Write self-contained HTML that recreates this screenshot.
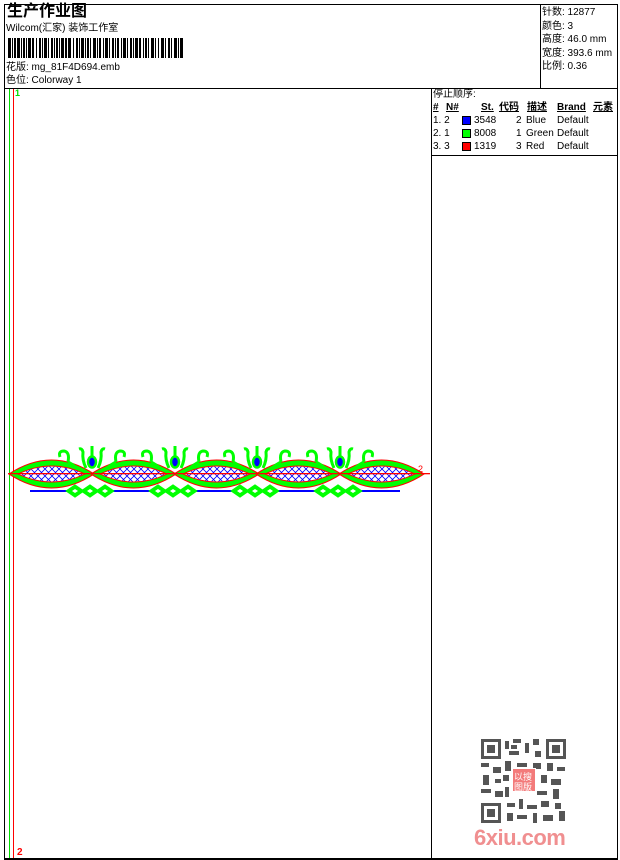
<!DOCTYPE html>
<html><head><meta charset="utf-8"><style>
html,body{margin:0;padding:0;background:#fff;}
body{width:620px;height:860px;position:relative;overflow:hidden;font-family:"Liberation Sans","Noto Sans CJK SC",sans-serif;color:#000;}
.a{position:absolute;}
.t{font-size:10px;line-height:12px;white-space:nowrap;}
.b{background:#000;}
</style></head><body>
<div class="a b" style="left:4px;top:4px;width:614px;height:1px"></div>
<div class="a b" style="left:4px;top:858px;width:614px;height:2px"></div>
<div class="a b" style="left:4px;top:4px;width:1px;height:855px"></div>
<div class="a b" style="left:617px;top:4px;width:1px;height:855px"></div>
<div class="a b" style="left:4px;top:88px;width:614px;height:1px"></div>
<div class="a b" style="left:540px;top:4px;width:1px;height:84px"></div>
<div class="a b" style="left:431px;top:88px;width:1px;height:771px"></div>
<div class="a b" style="left:431px;top:155px;width:187px;height:1px"></div>
<div class="a" style="left:7px;top:2px;font-size:16px;font-weight:bold;line-height:19px">生产作业图</div>
<div class="a t" style="left:6px;top:23px">Wilcom(汇家) 装饰工作室</div>
<svg class="a" style="left:8px;top:38px" width="176" height="20">
<g fill="#000">
<rect x="0" width="3" height="20"/><rect x="4" width="1" height="20"/><rect x="6" width="2" height="20"/><rect x="9" width="3" height="20"/><rect x="13" width="1" height="20"/><rect x="15" width="2" height="20"/><rect x="18" width="1" height="20"/><rect x="20" width="3" height="20"/><rect x="24" width="2" height="20"/><rect x="28" width="1" height="20"/><rect x="31" width="2" height="20"/><rect x="34" width="1" height="20"/><rect x="36" width="3" height="20"/><rect x="40" width="1" height="20"/><rect x="43" width="2" height="20"/><rect x="46" width="1" height="20"/><rect x="48" width="2" height="20"/><rect x="51" width="1" height="20"/><rect x="53" width="3" height="20"/><rect x="57" width="2" height="20"/><rect x="60" width="3" height="20"/><rect x="65" width="1" height="20"/><rect x="68" width="2" height="20"/><rect x="71" width="1" height="20"/><rect x="73" width="3" height="20"/><rect x="77" width="1" height="20"/><rect x="79" width="2" height="20"/><rect x="82" width="1" height="20"/><rect x="85" width="3" height="20"/><rect x="89" width="1" height="20"/><rect x="91" width="2" height="20"/><rect x="95" width="1" height="20"/><rect x="97" width="3" height="20"/><rect x="101" width="1" height="20"/><rect x="104" width="2" height="20"/><rect x="107" width="1" height="20"/><rect x="109" width="2" height="20"/><rect x="113" width="1" height="20"/><rect x="115" width="3" height="20"/><rect x="119" width="1" height="20"/><rect x="122" width="2" height="20"/><rect x="125" width="1" height="20"/><rect x="127" width="3" height="20"/><rect x="131" width="2" height="20"/><rect x="135" width="1" height="20"/><rect x="137" width="2" height="20"/><rect x="140" width="1" height="20"/><rect x="143" width="3" height="20"/><rect x="147" width="1" height="20"/><rect x="150" width="1" height="20"/><rect x="153" width="3" height="20"/><rect x="157" width="1" height="20"/><rect x="160" width="2" height="20"/><rect x="163" width="1" height="20"/><rect x="166" width="3" height="20"/><rect x="170" width="1" height="20"/><rect x="172" width="3" height="20"/>
</g></svg>
<div class="a t" style="left:6px;top:62px">花版: mg_81F4D694.emb</div>
<div class="a t" style="left:6px;top:75px">色位: Colorway 1</div>
<div class="a t" style="left:542px;top:6px;line-height:13.5px">针数: 12877<br>颜色: 3<br>高度: 46.0 mm<br>宽度: 393.6 mm<br>比例: 0.36</div>
<div class="a t" style="left:433px;top:89px">停止顺序:</div>
<div class="a t" style="left:433px;top:102px;font-weight:bold;text-decoration:underline">#</div>
<div class="a t" style="left:446px;top:102px;font-weight:bold;text-decoration:underline">N#</div>
<div class="a t" style="left:481px;top:102px;font-weight:bold;text-decoration:underline">St.</div>
<div class="a t" style="left:499px;top:102px;font-weight:bold;text-decoration:underline">代码</div>
<div class="a t" style="left:527px;top:102px;font-weight:bold;text-decoration:underline">描述</div>
<div class="a t" style="left:557px;top:102px;font-weight:bold;text-decoration:underline">Brand</div>
<div class="a t" style="left:593px;top:102px;font-weight:bold;text-decoration:underline">元素</div>
<div class="a t" style="left:433px;top:115px">1. 2</div><div class="a" style="left:462px;top:116px;width:9px;height:9px;background:#0000ff;border:1px solid #000;box-sizing:border-box"></div><div class="a t" style="left:474px;top:115px">3548</div><div class="a t" style="left:516px;top:115px">2</div><div class="a t" style="left:526px;top:115px">Blue</div><div class="a t" style="left:557px;top:115px">Default</div>
<div class="a t" style="left:433px;top:128px">2. 1</div><div class="a" style="left:462px;top:129px;width:9px;height:9px;background:#00ff00;border:1px solid #000;box-sizing:border-box"></div><div class="a t" style="left:474px;top:128px">8008</div><div class="a t" style="left:516px;top:128px">1</div><div class="a t" style="left:526px;top:128px">Green</div><div class="a t" style="left:557px;top:128px">Default</div>
<div class="a t" style="left:433px;top:141px">3. 3</div><div class="a" style="left:462px;top:142px;width:9px;height:9px;background:#ff0000;border:1px solid #000;box-sizing:border-box"></div><div class="a t" style="left:474px;top:141px">1319</div><div class="a t" style="left:516px;top:141px">3</div><div class="a t" style="left:526px;top:141px">Red</div><div class="a t" style="left:557px;top:141px">Default</div>
<div class="a" style="left:9px;top:89px;width:1px;height:769px;background:#00dd00"></div>
<div class="a" style="left:13px;top:89px;width:1px;height:769px;background:#ff0000"></div>
<div class="a" style="left:15px;top:88px;font-size:9px;font-weight:bold;color:#00dd00;line-height:10px">1</div>
<div class="a" style="left:17px;top:847px;font-size:10px;font-weight:bold;color:#ff0000;line-height:11px">2</div>
<svg class="a" style="left:0;top:0" width="431" height="860">
<defs>
<pattern id="h" width="7" height="7" patternUnits="userSpaceOnUse">
<path d="M0 0L7 7M7 0L0 7" stroke="#0000ff" stroke-width="0.8"/>
</pattern>
<g id="lens">
<path d="M-2 474Q41.5 445 85 474Q41.5 503 -2 474Z" fill="#ff0000"/>
<path d="M0 474Q41.5 447 83 474Q41.5 501 0 474Z" fill="#00ff00"/>
<path d="M7 474Q41.5 457 76 474Q41.5 491 7 474Z" fill="#ff0000"/>
<path d="M9 474Q41.5 459 74 474Q41.5 489 9 474Z" fill="#fff"/>
<path d="M9 474Q41.5 459 74 474Q41.5 489 9 474Z" fill="url(#h)"/>
</g>
<g id="crown" fill="none" stroke="#00ff00" stroke-width="3">
<path d="M-6 468Q-10 460 -9 452Q-10 448 -13 449"/><path d="M6 468Q10 460 9 452Q10 448 13 449"/><path d="M0 463V446"/>
<ellipse cx="0" cy="462" rx="4" ry="5.5" fill="#0000ff" stroke-width="2.5"/>
<path d="M-12 470Q-20 464 -24 462"/><path d="M12 470Q20 464 24 462"/>
<path d="M-24 462Q-22 452 -28 451Q-34 451 -32 457"/><path d="M24 462Q22 452 28 451Q34 451 32 457"/>
</g>
<g id="dia" fill="#00ff00" stroke="#00ff00" stroke-width="2">
<path d="M-23 491L-15 485.5L-7 491L-15 496.5Z"/><path d="M-8 491L0 485.5L8 491L0 496.5Z"/><path d="M7 491L15 485.5L23 491L15 496.5Z"/>
</g>
<g id="diw" fill="#fff">
<path d="M-18 491L-15 489L-12 491L-15 493Z"/><path d="M-3 491L0 489L3 491L0 493Z"/><path d="M12 491L15 489L18 491L15 493Z"/>
</g>
</defs>
<rect x="30" y="490" width="370" height="2" fill="#0000ff"/>
<use href="#lens" transform="translate(10 0)"/>
<use href="#lens" transform="translate(92 0)"/>
<use href="#lens" transform="translate(175 0)"/>
<use href="#lens" transform="translate(257 0)"/>
<use href="#lens" transform="translate(340 0)"/>
<use href="#crown" transform="translate(92 0)"/>
<use href="#crown" transform="translate(175 0)"/>
<use href="#crown" transform="translate(257 0)"/>
<use href="#crown" transform="translate(340 0)"/>
<use href="#dia" transform="translate(90 0)"/><use href="#diw" transform="translate(90 0)"/>
<use href="#dia" transform="translate(173 0)"/><use href="#diw" transform="translate(173 0)"/>
<use href="#dia" transform="translate(255 0)"/><use href="#diw" transform="translate(255 0)"/>
<use href="#dia" transform="translate(338 0)"/><use href="#diw" transform="translate(338 0)"/>
<rect x="8" y="473" width="422" height="1.3" fill="#ff0000"/>
<text x="418" y="472" font-size="9" fill="#ff0000" font-family="Liberation Sans">2</text>
</svg>
<svg class="a" style="left:481px;top:739px" width="85" height="84">
<g fill="#555">
<rect x="0" y="0" width="20" height="20"/><rect x="65" y="0" width="20" height="20"/><rect x="0" y="64" width="20" height="20"/>
<rect x="24" y="2" width="4" height="8"/><rect x="32" y="0" width="8" height="4"/><rect x="44" y="4" width="4" height="10"/><rect x="52" y="0" width="6" height="6"/>
<rect x="28" y="12" width="10" height="4"/><rect x="54" y="12" width="6" height="6"/><rect x="30" y="6" width="6" height="4"/>
<rect x="0" y="24" width="8" height="4"/><rect x="12" y="28" width="8" height="6"/><rect x="24" y="22" width="6" height="10"/><rect x="36" y="24" width="10" height="4"/><rect x="52" y="24" width="8" height="6"/><rect x="66" y="24" width="6" height="8"/><rect x="76" y="28" width="8" height="4"/>
<rect x="2" y="36" width="6" height="10"/><rect x="14" y="40" width="6" height="4"/><rect x="60" y="36" width="6" height="8"/><rect x="70" y="40" width="10" height="6"/><rect x="22" y="36" width="6" height="6"/>
<rect x="0" y="50" width="10" height="4"/><rect x="14" y="52" width="8" height="6"/><rect x="24" y="48" width="4" height="10"/><rect x="56" y="52" width="10" height="4"/><rect x="72" y="50" width="6" height="10"/>
<rect x="26" y="64" width="8" height="4"/><rect x="38" y="60" width="4" height="10"/><rect x="46" y="66" width="10" height="4"/><rect x="60" y="62" width="8" height="6"/><rect x="74" y="64" width="6" height="6"/>
<rect x="26" y="74" width="6" height="8"/><rect x="36" y="76" width="10" height="4"/><rect x="52" y="74" width="4" height="10"/><rect x="62" y="76" width="10" height="6"/><rect x="78" y="72" width="6" height="10"/>
</g>
<g fill="#fff"><rect x="3" y="3" width="14" height="14"/><rect x="68" y="3" width="14" height="14"/><rect x="3" y="67" width="14" height="14"/></g>
<g fill="#555"><rect x="6" y="6" width="8" height="8"/><rect x="71" y="6" width="8" height="8"/><rect x="6" y="70" width="8" height="8"/></g>
<rect x="31" y="29" width="24" height="24" fill="#fff"/>
<rect x="32" y="30" width="22" height="22" fill="#f37a7a"/>
<text x="33" y="41" font-size="9" fill="#fff" font-family="Noto Sans CJK SC">以搜</text>
<text x="33" y="51" font-size="9" fill="#fff" font-family="Noto Sans CJK SC">图版</text>
</svg>
<div class="a" style="left:474px;top:826px;font-size:22px;font-weight:bold;color:#f08f90;line-height:24px;letter-spacing:-0.5px">6xiu.com</div>
</body></html>
